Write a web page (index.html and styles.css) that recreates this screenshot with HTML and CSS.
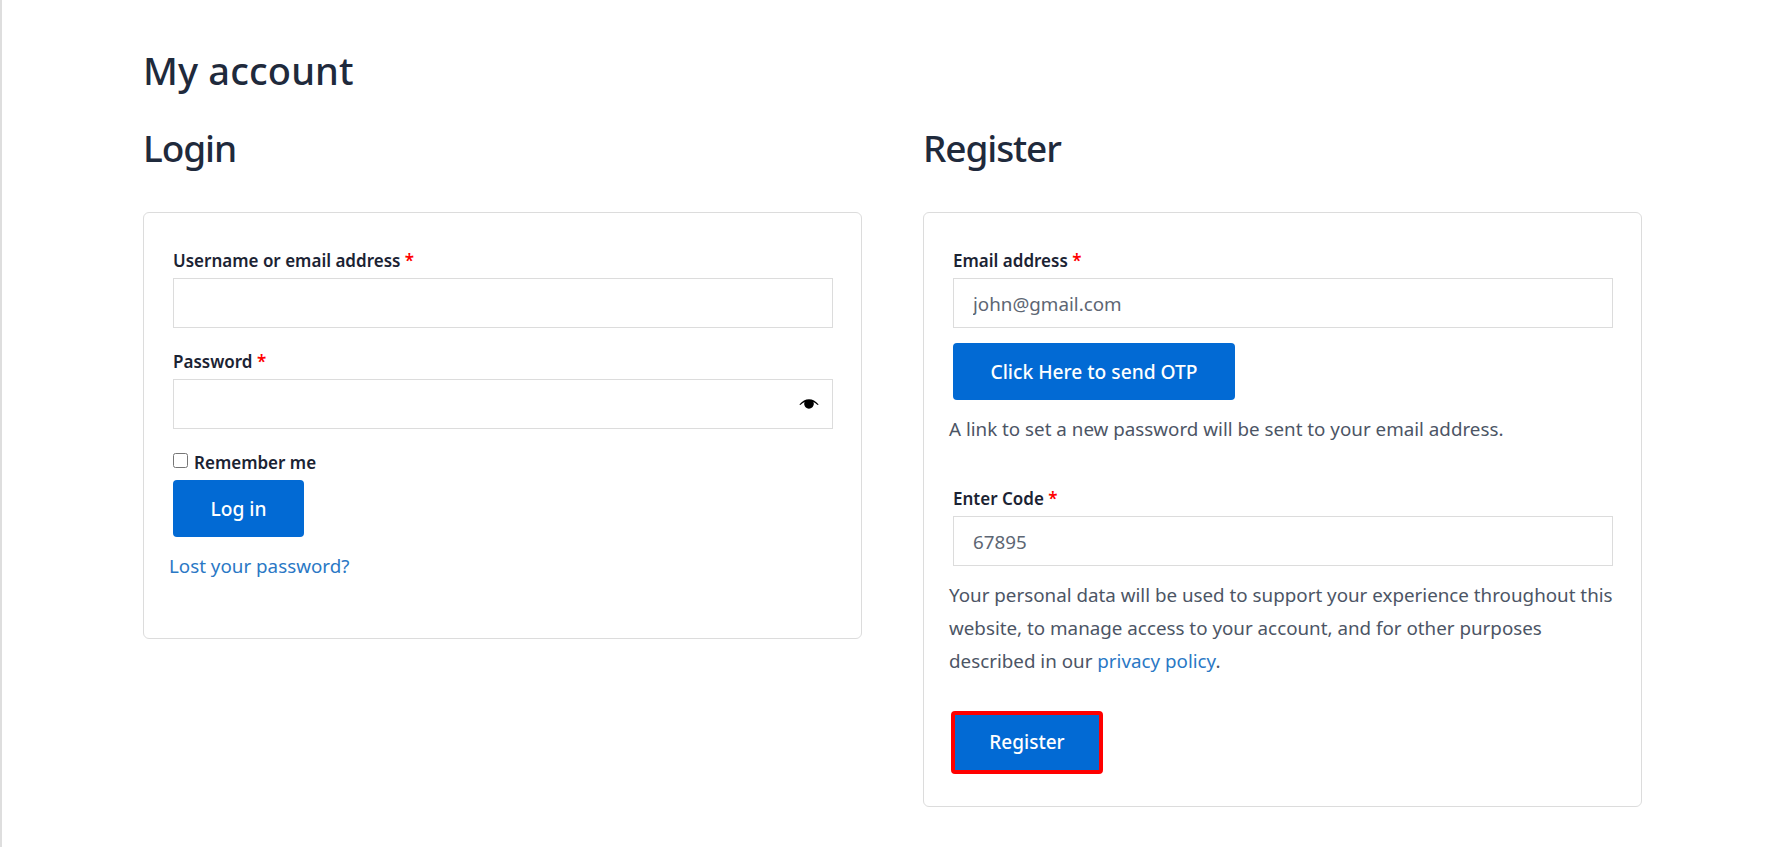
FILE: index.html
```html
<!DOCTYPE html>
<html>
    <head>
        <title>My account</title>
        <link rel="stylesheet" href="styles.css">
    </head>
    <body>
        <div class="page">
            <h1 class="page-title">My account</h1>
            <div class="columns">
                <div class="column">
                    <h2 class="column-title">Login</h2>
                    <form class="card card-login">
                        <label class="field-label" for="username">Username or email address <span class="req">*</span></label>
                        <input class="field" type="text" id="username">
                        <label class="field-label label-password" for="password">Password <span class="req">*</span></label>
                        <div class="password-wrap">
                            <input class="field" type="password" id="password">
                            <svg class="eye" viewBox="0 0 24 16" width="22" height="14">
                                <path d="M1 8.500C4.500 4.500 8 2.600 12 2.600s7.500 1.900 11 5.900l-1 .7C19.600 7.200 18.200 6.200 17 5.700c.3 .7 .5 1.400 .5 2.100 0 3-2.500 5.600-5.500 5.600S6.500 10.800 6.500 7.800c0-.7 .2-1.400 .5-2.100-1.200 .5-2.600 1.500-5 3.500z" fill="#000"/>
                            </svg>
                        </div>
                        <label class="remember" for="remember">
                            <input class="check" type="checkbox" id="remember">
                            <span>Remember me</span>
                        </label>
                        <button type="button" class="button button-login">Log in</button>
                        <a class="link lost" href="#">Lost your password?</a>
                    </form>
                </div>
                <div class="column">
                    <h2 class="column-title">Register</h2>
                    <form class="card card-register">
                        <label class="field-label" for="email">Email address <span class="req">*</span></label>
                        <input class="field" type="text" id="email" value="john@gmail.com">
                        <button type="button" class="button button-otp">Click Here to send OTP</button>
                        <p class="note">A link to set a new password will be sent to your email address.</p>
                        <label class="field-label label-code" for="code">Enter Code <span class="req">*</span></label>
                        <input class="field" type="text" id="code" value="67895">
                        <p class="privacy">Your personal data will be used to support your experience throughout this website, to manage access to your account, and for other purposes described in our <a class="link" href="#">privacy policy</a>.</p>
                        <button type="button" class="button button-register">Register</button>
                    </form>
                </div>
            </div>
        </div>
    </body>
</html>
```
FILE: styles.css
```css
* {
    box-sizing: border-box;
}

html, body {
    margin: 0;
    height: 100%;
}

body {
    background-color: #fff;
    color: #1f2a3c;
    font-family: "Noto Sans", "Open Sans", sans-serif;
    overflow: hidden;
}

.page {
    height: 847px;
    padding: 41px 129px 0 143px;
    border-left: 2px solid #dedede;
}

.page-title {
    margin: 0 0 0 -2px;
    font-size: 38px;
    font-weight: 500;
    line-height: 58px;
    letter-spacing: 0.15px;
}

.columns {
    display: flex;
    gap: 61px;
    margin-left: -2px;
    align-items: flex-start;
    margin-top: 20px;
}

.column {
    width: 719px;
}

.column-title {
    margin: 0 0 35px;
    font-size: 37px;
    font-weight: 500;
    line-height: 58px;
    letter-spacing: -1.1px;
}

.card {
    display: flex;
    flex-direction: column;
    align-items: flex-start;
    background-color: #fff;
    border: 1px solid #dcdcdc;
    border-radius: 6px;
    padding: 36px 29px 0;
}

.card-login {
    height: 427px;
}

.card-register {
    height: 595px;
}

.field-label {
    display: block;
    font-size: 17px;
    font-weight: 600;
    line-height: 24px;
    margin-bottom: 5px;
    color: #1b2333;
}

.req {
    color: #f00;
}

.field {
    display: block;
    width: 660px;
    height: 50px;
    border: 1px solid #dcdcdc;
    background-color: #fff;
    padding: 2px 19px 0;
    font-family: inherit;
    font-size: 18.8px;
    color: #5d6673;
    outline: none;
}

.label-password {
    margin-top: 22px;
}

.password-wrap {
    position: relative;
}

.eye {
    position: absolute;
    right: 13px;
    top: 18px;
}

.remember {
    display: flex;
    align-items: center;
    gap: 6px;
    margin-top: 22px;
    font-size: 17px;
    font-weight: 600;
    line-height: 24px;
    color: #1b2333;
}

.check {
    width: 15px;
    height: 15px;
    margin: 0 0 5px;
}

.button {
    display: block;
    background-color: #026ad4;
    border: none;
    border-radius: 4px;
    color: #fff;
    font-family: inherit;
    font-size: 19.2px;
    font-weight: 500;
    height: 57px;
}

.button-login {
    width: 131px;
    margin-top: 5px;
}

.link {
    color: #2a78c5;
    text-decoration: none;
}

.lost {
    margin: 13px 0 0 -4px;
    font-size: 18.8px;
    line-height: 32px;
}

.button-otp {
    width: 282px;
    margin-top: 15px;
}

.note, .privacy {
    margin: 0 0 0 -4px;
    font-size: 18.8px;
    line-height: 33px;
    color: #4c5565;
}

.note {
    margin-top: 13px;
}

.label-code {
    margin-top: 41px;
}

.privacy {
    margin-top: 13px;
    width: 672px;
}

.button-register {
    width: 152px;
    height: 63px;
    margin: 33px 0 0 -2px;
    padding-bottom: 2px;
    border: 4px solid #f00;
    font-size: 19px;
}
```
